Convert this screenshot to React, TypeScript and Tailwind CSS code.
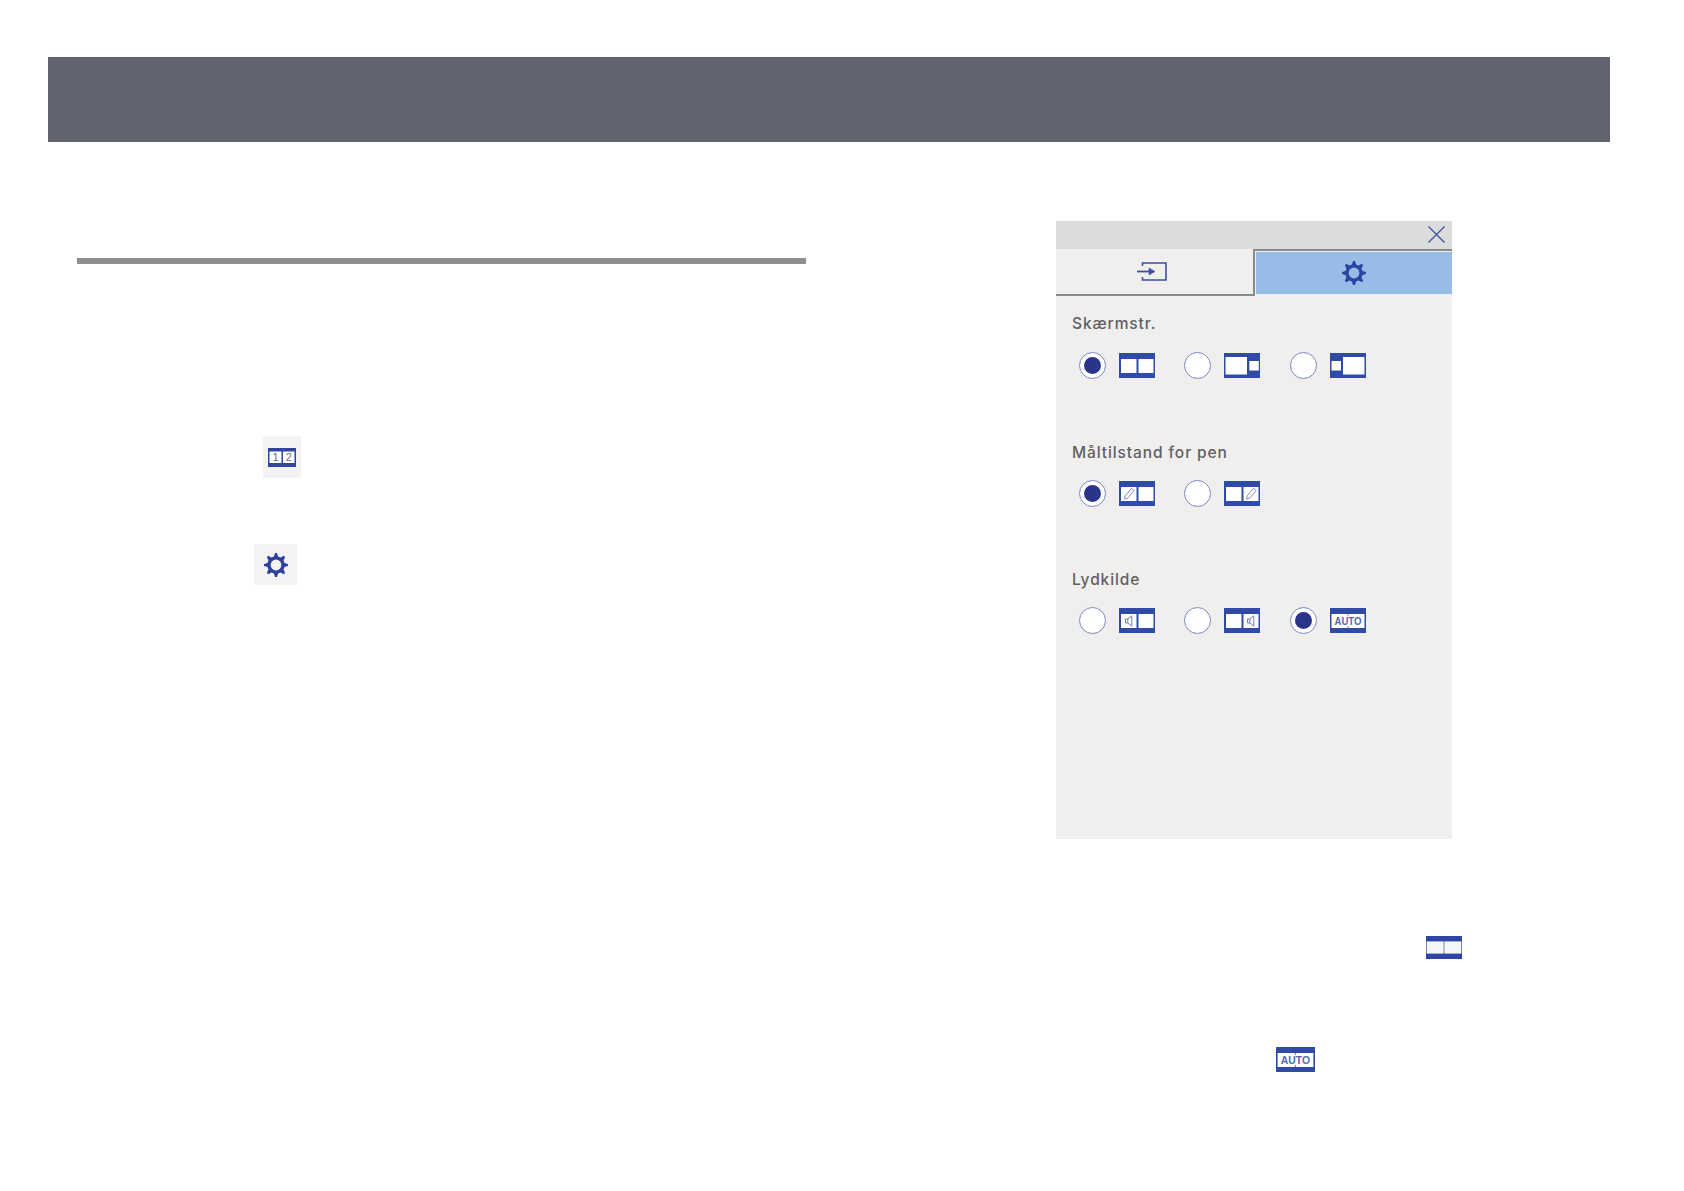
import React from 'react';

const BLUE = '#2f4ba5';

// 8-tooth gear outline, computed once for the two gear sizes
const gearPoints = (() => {
  const pts: string[] = [];
  for (let i = 0; i < 8; i++) {
    const a = (i * Math.PI) / 4;
    const add = (r: number, d: number) => {
      const t = a + d;
      pts.push(`${(12 + r * Math.sin(t)).toFixed(2)},${(12 - r * Math.cos(t)).toFixed(2)}`);
    };
    add(8.8, -0.24);
    add(12, -0.08);
    add(12, 0.08);
    add(8.8, 0.24);
  }
  return pts.join(' ');
})();

const Gear = ({ size, color = '#2c45a0' }: { size: number; color?: string }) => (
  <svg width={size} height={size} viewBox="0 0 24 24">
    <polygon points={gearPoints} fill={color} />
    <circle cx="12" cy="12" r="5.4" fill="var(--hole)" />
  </svg>
);

type Mark = 'none' | 'penL' | 'penR' | 'spkL' | 'spkR';

const Pen = ({ x }: { x: number }) => (
  <g transform={`translate(${x} 13) rotate(40)`} fill="none" stroke="#7f8ac4" strokeWidth="0.9">
    <path d="M-1.7 -6 L1.7 -6 L1.7 4 L0 6.8 L-1.7 4 Z" />
  </g>
);

const Speaker = ({ x }: { x: number }) => (
  <path
    transform={`translate(${x} 13)`}
    d="M-3.5 -2 L-1.2 -2 L2.8 -5.2 L2.8 5.2 L-1.2 2 L-3.5 2 Z M-1.2 -2 L-1.2 2"
    fill="none"
    stroke="#5f73b8"
    strokeWidth="0.9"
  />
);

const Split = ({ mark = 'none' }: { mark?: Mark }) => (
  <svg width="36" height="25" viewBox="0 0 36 25">
    <rect width="36" height="25" fill={BLUE} />
    <rect x="2" y="6" width="15.5" height="14" fill="#fff" />
    <rect x="19.5" y="6" width="15" height="14" fill="#fff" />
    {mark === 'penL' && <Pen x={10} />}
    {mark === 'penR' && <Pen x={27} />}
    {mark === 'spkL' && <Speaker x={10} />}
    {mark === 'spkR' && <Speaker x={27} />}
  </svg>
);

const BigSmall = ({ flip = false }: { flip?: boolean }) => (
  <svg width="36" height="25" viewBox="0 0 36 25">
    <rect width="36" height="25" fill={BLUE} />
    <rect x={flip ? 13 : 1.5} y="4" width="21.5" height="17.5" fill="#fff" />
    <rect x={flip ? 1.5 : 25.3} y="8" width="9.5" height="9.5" fill="#fff" />
  </svg>
);

const Auto = ({ w = 36, h = 25 }: { w?: number; h?: number }) => (
  <svg width={w} height={h} viewBox="0 0 36 25" preserveAspectRatio="none">
    <rect width="36" height="25" fill={BLUE} />
    <rect x="1.5" y="6" width="33" height="14" fill="#fff" />
    <path d="M18 6 V8 M18 18 V20" stroke="#5a6db5" strokeWidth="0.8" />
    <text
      x="18"
      y="17.4"
      textAnchor="middle"
      fontSize="11.5"
      fontWeight="700"
      fill="#5068b0"
      textLength="27"
      lengthAdjust="spacingAndGlyphs"
      fontFamily="'Liberation Sans', sans-serif"
    >
      AUTO
    </text>
  </svg>
);

const Radio = ({ on = false }: { on?: boolean }) => (
  <span className="w-[27px] h-[27px] rounded-full bg-white border-[1.5px] border-[#7d88c2] flex items-center justify-center shrink-0">
    {on && <span className="w-[17px] h-[17px] rounded-full bg-[#2a3488]" />}
  </span>
);

const Option = ({ on, children }: { on?: boolean; children: React.ReactNode }) => (
  <div className="w-[105.5px] flex items-center gap-[13px]">
    <Radio on={on} />
    {children}
  </div>
);

const Section = ({ label, gap, rowGap, children }: { label: string; gap: string; rowGap: string; children: React.ReactNode }) => (
  <div className={gap}>
    <div className="h-[22px] leading-[22px] text-[15.5px] font-medium tracking-[0.9px] text-[#606060] font-['Inter','Noto_Sans',sans-serif]">
      {label}
    </div>
    <div className={`pl-[6.9px] flex ${rowGap}`}>{children}</div>
  </div>
);

const SettingsPanel = () => (
  <div className="w-[396px] h-[618px] bg-[#f0efee] flex flex-col">
    <div className="h-[28px] bg-[#dcdcdc] flex items-center justify-end pr-[7px] pb-[2px]">
      <svg width="17" height="17" viewBox="0 0 17 17" stroke="#3f51a0" strokeWidth="1.3">
        <path d="M0.5 0.5 L16.5 16.5 M16.5 0.5 L0.5 16.5" />
      </svg>
    </div>
    <div className="h-[47px] flex">
      <div className="w-[197px] border-b-2 border-[#8a8a8a] flex items-center justify-center pr-[5px]">
        <svg width="30" height="19" viewBox="0 0 30 19" fill="none" stroke="#3a50a4">
          <path d="M5.5 4 V1 H29 V18 H5.5 V15" strokeWidth="1.6" />
          <path d="M0 9.5 H13" strokeWidth="1.8" />
          <path d="M12 6 L18 9.5 L12 13 Z" fill="#3a50a4" strokeWidth="0.5" />
        </svg>
      </div>
      <div className="flex-1 border-t-2 border-l-2 border-[#8a8a8a] pt-px pb-[2px] pl-px">
        <div className="h-full bg-[#97bde6] flex items-center justify-center [--hole:#97bde6]">
          <Gear size={24} />
        </div>
      </div>
    </div>
    <div className="pt-[17px] pl-[16px] flex flex-col">
      <Section label="Skærmstr." gap="mb-[63px]" rowGap="mt-[17px]">
        <Option on><Split /></Option>
        <Option><BigSmall /></Option>
        <Option><BigSmall flip /></Option>
      </Section>
      <Section label="Måltilstand for pen" gap="mb-[62px]" rowGap="mt-[16px]">
        <Option on><Split mark="penL" /></Option>
        <Option><Split mark="penR" /></Option>
      </Section>
      <Section label="Lydkilde" gap="mb-0" rowGap="mt-[16px]">
        <Option><Split mark="spkL" /></Option>
        <Option><Split mark="spkR" /></Option>
        <Option on><Auto /></Option>
      </Section>
    </div>
  </div>
);

const App: React.FC = () => {
  return (
    <div className="w-[1684px] h-[1191px] bg-white overflow-hidden pt-[57px]">
      <div className="ml-[48px] w-[1562px] h-[85px] bg-[#5f6470]" />

      <div className="flex">
        {/* left column */}
        <div className="ml-[77px] w-[729px] pt-[116px]">
          <div className="h-[6px] bg-[#8e8e8e]" />
          <div className="mt-[172px] ml-[186px] w-[38px] h-[42px] bg-[#f3f3f3] flex items-center justify-center">
            <svg width="28" height="19" viewBox="0 0 28 19">
              <rect width="28" height="19" fill="#2f45a0" />
              <rect x="1.5" y="3.5" width="12" height="11.5" fill="#fff" />
              <rect x="15" y="3.5" width="11.5" height="11.5" fill="#fff" />
              <text x="7.5" y="13.4" textAnchor="middle" fontSize="11" fill="#6b6f8a" fontFamily="'Liberation Sans', sans-serif">1</text>
              <text x="20.7" y="13.4" textAnchor="middle" fontSize="11" fill="#6b6f8a" fontFamily="'Liberation Sans', sans-serif">2</text>
            </svg>
          </div>
          <div className="mt-[66px] ml-[177px] w-[43px] h-[41px] bg-[#f3f3f3] flex items-center justify-center [--hole:#f3f3f3]">
            <Gear size={24} color="#2f3f9e" />
          </div>
        </div>

        {/* right column */}
        <div className="ml-[250px] pt-[79px]">
          <SettingsPanel />
          <div className="relative h-[220px]">
            <div className="absolute left-[370px] top-[97px]">
              <svg width="36" height="23" viewBox="0 0 36 23">
                <rect width="36" height="23" fill="#7c84a8" />
                <rect width="36" height="5.5" fill="#2f45a8" />
                <rect y="17.5" width="36" height="5.5" fill="#2f45a8" />
                <rect x="1" y="5.5" width="16.5" height="12" fill="#f4f5f8" />
                <rect x="18.5" y="5.5" width="16.5" height="12" fill="#f4f5f8" />
              </svg>
            </div>
            <div className="absolute left-[220px] top-[208px]">
              <Auto w={39} h={25} />
            </div>
          </div>
        </div>
      </div>
    </div>
  );
};

export default App;
